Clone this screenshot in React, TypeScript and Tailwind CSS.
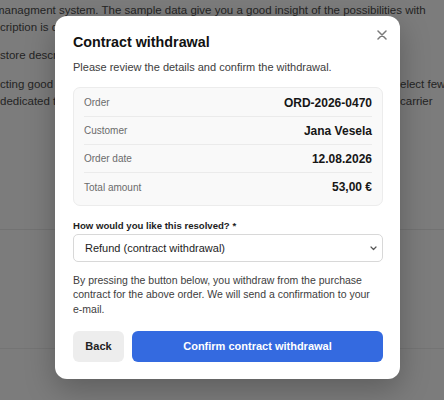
import React from "react";

function Row({ label, value, last }: { label: string; value: string; last?: boolean }) {
  return (
    <div
      className={
        "flex h-[28px] items-center justify-between " +
        (last ? "" : "border-b border-[#ebebeb]")
      }
    >
      <span className="text-[10px] text-[#6b6b6b]">{label}</span>
      <span className="text-[12px] font-bold text-[#161616]">{value}</span>
    </div>
  );
}

export default function App() {
  return (
    <div className="relative h-[400px] w-[444px] overflow-hidden bg-[#7c7c7c] font-['Liberation_Sans',Arial,sans-serif]">
      {/* background page */}
      <div className="pt-[1.5px] text-[11.5px] leading-[17px] text-[#242424]">
        <div className="ml-[-5px] whitespace-nowrap">
          managment system. The sample data give you a good insight of the possibilities with
        </div>
        <div className="w-[60px] overflow-hidden whitespace-nowrap">cription is displayed</div>
        <div className="mt-[11px] w-[60px] overflow-hidden whitespace-nowrap">store description</div>
        <div className="mt-[12px] flex whitespace-nowrap">
          <span className="w-[60px] overflow-hidden">cting good customer</span>
          <span className="flex-1" />
          <span className="w-[44px] shrink-0 overflow-visible">elect few</span>
        </div>
        <div className="flex whitespace-nowrap">
          <span className="w-[60px] overflow-hidden">dedicated to shipping</span>
          <span className="flex-1" />
          <span className="w-[44px] shrink-0 overflow-visible">carrier</span>
        </div>
        <div className="mt-[119px] h-px bg-[#727272]" />
        <div className="mt-[118px] h-px bg-[#747474]" />
      </div>

      {/* dialog overlay */}
      <div className="absolute inset-0 pl-[55px] pt-[16px]">
        <div className="relative w-[345px] rounded-[12px] bg-white pb-[17px] pl-[18px] pr-[17px] pt-[17px] shadow-[0_10px_30px_rgba(0,0,0,0.25)]">
          <button className="absolute right-[13px] top-[13px] flex h-[11px] w-[11px] items-center justify-center text-[#7a7a7a]">
            <svg width="10" height="10" viewBox="0 0 10 10" fill="none">
              <path d="M1 1 L9 9 M9 1 L1 9" stroke="currentColor" strokeWidth="1.5" strokeLinecap="round" />
            </svg>
          </button>

          <h2 className="text-[14.3px] font-bold leading-[18px] text-[#111]">Contract withdrawal</h2>
          <p className="mt-[8.5px] text-[11px] leading-[15px] text-[#3d3d3d]">
            Please review the details and confirm the withdrawal.
          </p>

          <div className="mt-[12.5px] rounded-[7px] border border-[#ececec] bg-[#f9f9f9] px-[10px] pb-[4px] pt-[1px]">
            <Row label="Order" value="ORD-2026-0470" />
            <Row label="Customer" value="Jana Vesela" />
            <Row label="Order date" value="12.08.2026" />
            <Row label="Total amount" value="53,00 €" last />
          </div>

          <div className="mt-[12.5px] text-[9.6px] font-bold leading-[13px] text-[#1d1d1d]">
            How would you like this resolved? *
          </div>
          <div className="mt-[2.5px] flex h-[28px] items-center justify-between rounded-[5px] border border-[#d8d8d8] bg-white pl-[11px] pr-[5px]">
            <span className="text-[11px] text-[#1d1d1d]">Refund (contract withdrawal)</span>
            <svg width="7" height="5" viewBox="0 0 7 5" fill="none">
              <path d="M1 1 L3.5 3.5 L6 1" stroke="#555" strokeWidth="1.2" strokeLinecap="round" strokeLinejoin="round" />
            </svg>
          </div>

          <p className="mt-[10.75px] text-[10.5px] leading-[14.5px] text-[#3d3d3d]">
            By pressing the button below, you withdraw from the purchase contract for the above order. We will send a
            confirmation to your <span className="whitespace-nowrap">e-mail.</span>
          </p>

          <div className="mt-[14.75px] flex h-[31px] gap-[8px]">
            <button className="w-[51px] rounded-[6px] bg-[#ededed] text-[11px] font-bold text-[#222]">Back</button>
            <button className="flex-1 rounded-[6px] bg-[#346ae0] text-[11px] font-bold text-white">
              Confirm contract withdrawal
            </button>
          </div>
        </div>
      </div>
    </div>
  );
}
